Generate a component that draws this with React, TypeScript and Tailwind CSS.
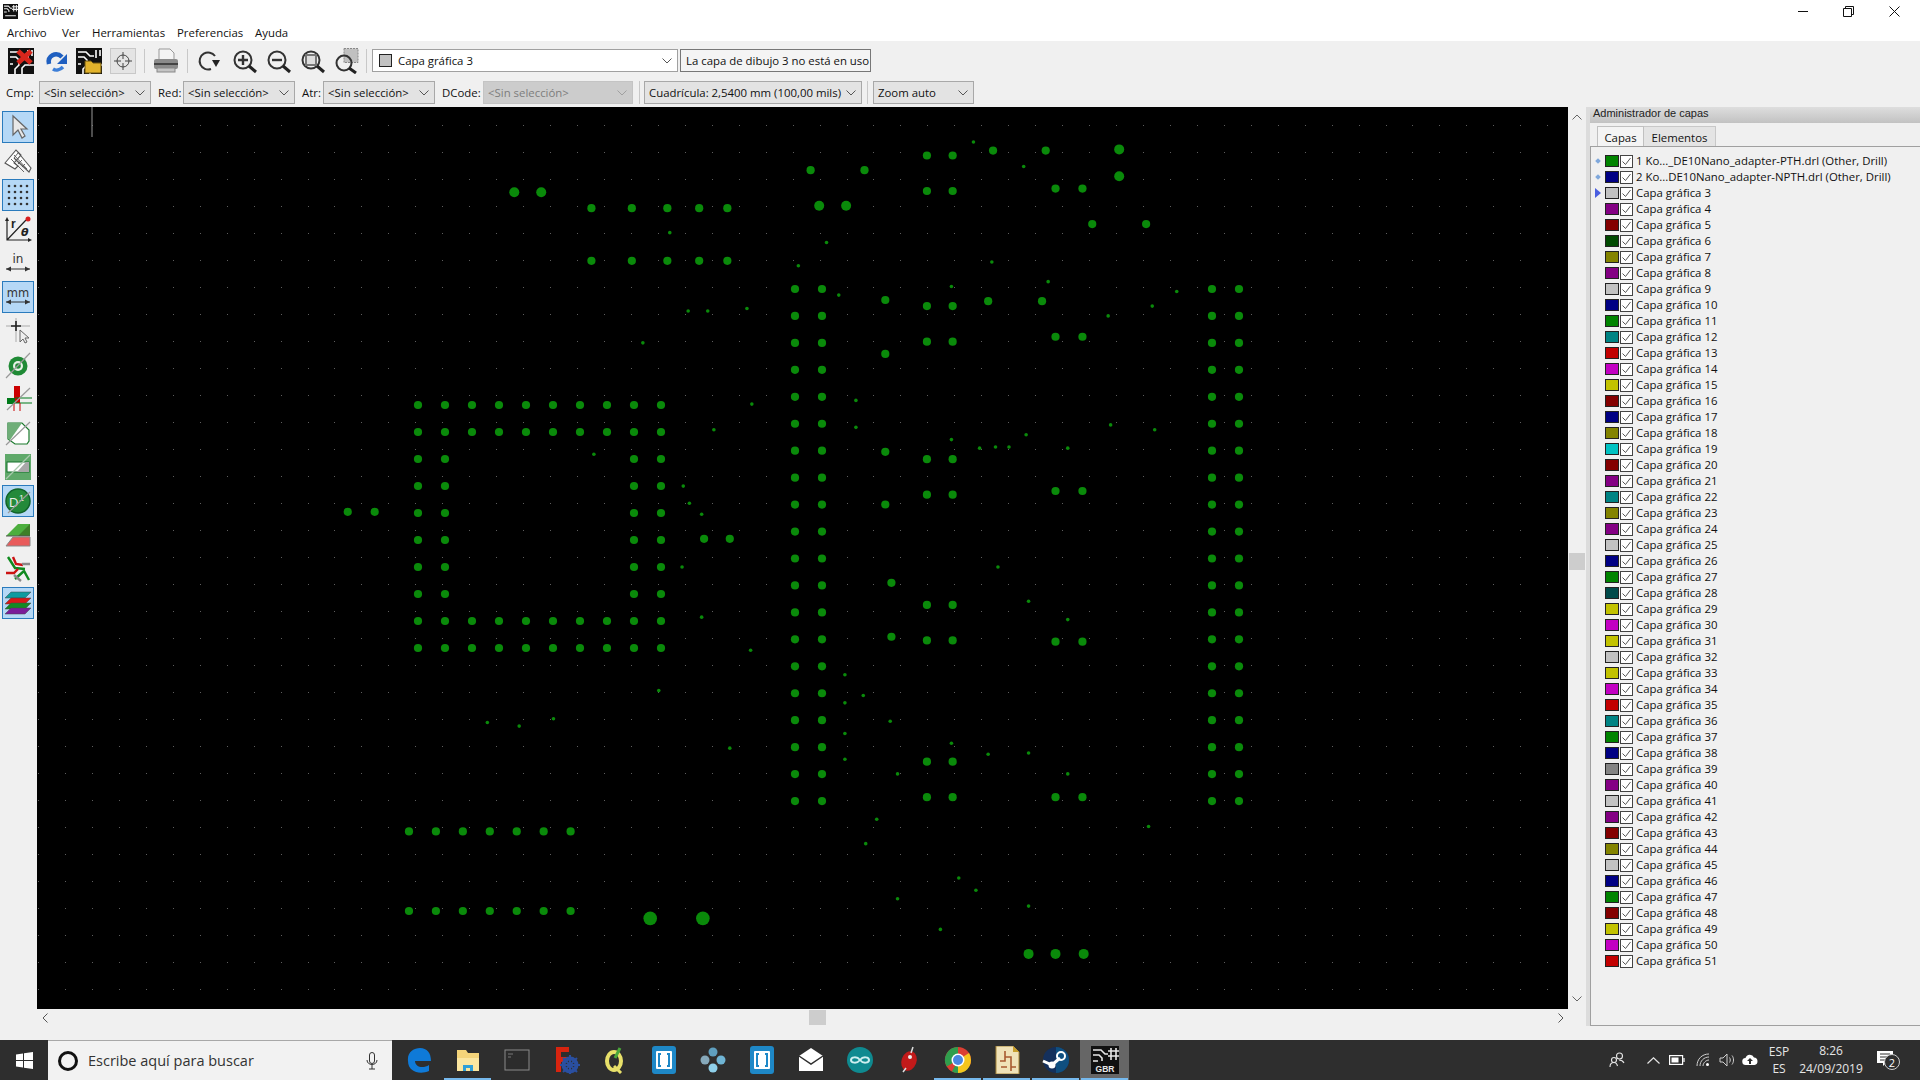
import React from 'react';

const k = 1920 / 1568;

const range = (from: number, count: number, step: number) => Array.from({ length: count }, (_, i) => from + i * step);

// drill hits, in full-size page coordinates
const pinHoles: [number, number][] = [];
range(418, 10, 27).forEach((x, i) => {
  range(405, 10, 27).forEach((y, j) => {
    if (j < 2 || j > 7 || i < 2 || i > 7) pinHoles.push([x, y]);
  });
});
[795, 822, 1212, 1239].forEach((x) => range(289, 20, 26.95).forEach((y) => pinHoles.push([x, y])));

// the rest was read off the shrunk picture
const mediumHoles: [number, number][] = ([
  [483, 170], [516, 170], [545, 170], [571, 170], [594, 170], [483, 213], [516, 213], [545, 213], [571, 213], [594, 213],
  [662, 139], [706, 139], [757, 127], [778, 127], [811, 123], [854, 123], [757, 156], [778, 156], [862, 154], [884, 154],
  [892, 183], [936, 183], [723, 245], [757, 250], [778, 250], [807, 246], [851, 246], [757, 279], [778, 279], [862, 275],
  [884, 275], [723, 289], [723, 369], [757, 375], [778, 375], [757, 404], [778, 404], [862, 401], [884, 401], [723, 412],
  [728, 476], [757, 494], [778, 494], [728, 520], [757, 523], [778, 523], [862, 524], [884, 524], [757, 622], [778, 622],
  [757, 651], [778, 651], [862, 651], [884, 651], [284, 418], [306, 418], [575, 440], [596, 440],
  [334, 679], [356, 679], [378, 679], [400, 679], [422, 679], [444, 679], [466, 679],
  [334, 744], [356, 744], [378, 744], [400, 744], [422, 744], [444, 744], [466, 744],
] as [number, number][]).map(([x, y]) => [x * k, y * k]);

const largeHoles: [number, number][] = ([
  [420, 157], [442, 157], [669, 168], [691, 168], [914, 122], [914, 144], [840, 779], [862, 779], [885, 779],
] as [number, number][]).map(([x, y]) => [x * k, y * k]);

const mountHoles: [number, number][] = ([[531, 750], [574, 750]] as [number, number][]).map(([x, y]) => [x * k, y * k]);

const vias: [number, number][] = ([
  [795, 116], [836, 136], [547, 190], [675, 198], [652, 217], [810, 214], [856, 230], [777, 234], [685, 241], [961, 238],
  [941, 250], [905, 258], [562, 254], [578, 254], [610, 252], [525, 280], [614, 330], [583, 351], [699, 327], [699, 349],
  [907, 347], [943, 351], [838, 355], [777, 359], [800, 366], [813, 365], [824, 365], [872, 366], [485, 371], [558, 397],
  [563, 411], [573, 420], [557, 463], [815, 463], [840, 491], [573, 504], [872, 506], [690, 551], [613, 531], [538, 564],
  [705, 568], [690, 574], [727, 589], [690, 599], [398, 590], [424, 593], [452, 587], [596, 611], [777, 607], [807, 616],
  [840, 615], [733, 632], [690, 620], [872, 632], [716, 669], [938, 675], [707, 689], [783, 717], [797, 727], [733, 734],
  [840, 740], [768, 759],
] as [number, number][]).map(([x, y]) => [x * k, y * k]);

let gridPath = '';
range(38, 57, 26.95).forEach((x) => {
  range(125, 33, 27).forEach((y) => {
    gridPath += `M${Math.round(x)} ${y}h1v1h-1z`;
  });
});

const G = '#008400', N = '#000084', S = '#c2c2c2', P = '#840084', R = '#840000', DG = '#004a00', O = '#848400';
const T = '#008484', B = '#c20000', M = '#c200c2', Y = '#c2c200', C = '#00c2c2', DT = '#004a4a', D = '#848484';

const layerColors = [
  G, N, S, P, R, DG, O, P, S, N, G, T, B, M, Y, R, N, O, C, R, P, T, O, P, S, N, G, DT, Y, M, Y, S, Y, M, B, T, G, N, D, P, S,
  P, R, O, S, N, G, R, Y, M, B,
];

const layerName = (i: number) => {
  if (i === 0) return '1 Ko..._DE10Nano_adapter-PTH.drl (Other, Drill)';
  if (i === 1) return '2 Ko...DE10Nano_adapter-NPTH.drl (Other, Drill)';
  return `Capa gráfica ${i + 1}`;
};

const Chevron = ({ color = '#555' }: { color?: string }) => (
  <svg width="10" height="6" viewBox="0 0 10 6" fill="none" stroke={color}>
    <path d="M0.5 0.5 5 5 9.5 0.5" />
  </svg>
);

const Separator = ({ className }: { className: string }) => <div className={`w-px h-[24px] bg-[#c8c8c8] ${className}`} />;

const Select = ({ text, className, disabled }: { text: string; className: string; disabled?: boolean }) => (
  <div
    className={`h-[23px] flex items-center justify-between pl-[4px] pr-[5px] border whitespace-nowrap ${
      disabled ? 'border-[#c4c4c4] bg-[#cccccc] text-[#7d7d7d]' : 'border-[#a8a8a8] bg-[#e3e3e3] text-[#111]'
    } ${className}`}
  >
    <span>{text}</span>
    <Chevron color={disabled ? '#a0a0a0' : '#555'} />
  </div>
);

const BoardTraces = () => (
  <>
    <rect x="0" y="0" width="26" height="26" fill="#111" />
    <path d="M2 4h8l4 4h4M2 9h6l3 3v5l-4 4v5M14 26v-6l3-3h9M2 16h3M20 2v8M24 2v6" stroke="#fff" strokeWidth="1.6" fill="none" />
  </>
);

const Magnifier = ({ children }: { children?: React.ReactNode }) => (
  <svg width="26" height="26" viewBox="0 0 26 26" fill="none">
    <circle cx="11" cy="12" r="8.5" stroke="#333" strokeWidth="2" />
    <path d="M17 18l7 6" stroke="#222" strokeWidth="3" />
    {children}
  </svg>
);

const Toolbar1 = () => (
  <div className="h-[39px] bg-[#f0f0f0] flex items-center pl-[8px]">
    <svg width="26" height="26" viewBox="0 0 26 26">
      <BoardTraces />
      <path d="M10 3l13 12M23 3 10 15" stroke="#d8261c" strokeWidth="5" />
    </svg>
    <svg className="ml-[10px]" width="26" height="26" viewBox="0 0 26 26" fill="none">
      <path d="M5 16C3 8 12 3 18 9" stroke="#1f5fc0" strokeWidth="4.5" />
      <path d="M23 6v10H13z" fill="#1f5fc0" />
      <path d="M9 21c3 2 7 1 10-2" stroke="#3d7fd8" strokeWidth="3.5" />
    </svg>
    <svg className="ml-[6px]" width="26" height="26" viewBox="0 0 26 26">
      <BoardTraces />
      <path d="M9 13h6l2 2h8v10H9z" fill="#e2b32c" stroke="#6b5412" />
    </svg>
    <div className="ml-[8px] w-[26px] h-[26px] bg-[#e4e4e4] border border-[#c8c8c8] flex items-center justify-center">
      <svg width="20" height="20" viewBox="0 0 20 20" fill="none" stroke="#444">
        <circle cx="10" cy="10" r="6" />
        <path d="M10 1v7M10 12v7M1 10h7M12 10h7" />
      </svg>
    </div>
    <Separator className="ml-[8px]" />
    <svg className="ml-[8px]" width="26" height="26" viewBox="0 0 26 26">
      <path d="M6 1h11l4 4v7H6z" fill="#f4f4f4" stroke="#999" />
      <rect x="1" y="11" width="24" height="10" rx="2" fill="#8b8b8b" />
      <rect x="1" y="15" width="24" height="2" fill="#444" />
      <rect x="4" y="20" width="18" height="4" fill="#c4c4c4" stroke="#888" />
    </svg>
    <Separator className="ml-[8px]" />
    <svg className="ml-[8px]" width="26" height="26" viewBox="0 0 26 26" fill="none">
      <path d="M19 8A8.5 8.5 0 1 0 15 21" stroke="#333" strokeWidth="2" />
      <path d="M16 12h8l-4 7z" fill="#222" />
    </svg>
    <div className="ml-[10px]">
      <Magnifier>
        <path d="M6 12h10M11 7v10" stroke="#333" strokeWidth="2.4" />
      </Magnifier>
    </div>
    <div className="ml-[8px]">
      <Magnifier>
        <path d="M6 12h10" stroke="#333" strokeWidth="2.4" />
      </Magnifier>
    </div>
    <div className="ml-[8px]">
      <Magnifier>
        <rect x="6" y="7" width="10" height="10" stroke="#777" strokeWidth="2" fill="#ddd" />
      </Magnifier>
    </div>
    <div className="ml-[8px]">
      <svg width="26" height="26" viewBox="0 0 26 26" fill="none">
        <rect x="10" y="0.5" width="14" height="14" fill="#c0c0c0" stroke="#888" strokeDasharray="2 1" />
        <circle cx="10" cy="15" r="7.5" stroke="#333" strokeWidth="2" />
        <path d="M15 20l7 5" stroke="#222" strokeWidth="3" />
      </svg>
    </div>
    <Separator className="ml-[6px]" />
    <div className="ml-[5px] w-[306px] h-[23px] bg-white border border-[#a0a0a0] flex items-center justify-between pl-[6px] pr-[5px]">
      <div className="flex items-center">
        <span className="w-[13px] h-[13px] bg-[#c2c2c2] border border-[#222]" />
        <span className="ml-[6px] text-[#111]">Capa gráfica 3</span>
      </div>
      <Chevron />
    </div>
    <div className="ml-[2px] w-[191px] h-[23px] border border-[#777] bg-[#f4f4f4] flex items-center pl-[5px] whitespace-nowrap text-[#111]">
      La capa de dibujo 3 no está en uso
    </div>
  </div>
);

const Toolbar2 = () => (
  <div className="h-[27px] bg-[#f0f0f0] flex items-start pt-[1px] pl-[6px] text-[#111]">
    <span className="w-[33px] h-[23px] flex items-center">Cmp:</span>
    <Select text="<Sin selección>" className="w-[112px]" />
    <span className="ml-[7px] w-[25px] h-[23px] flex items-center">Red:</span>
    <Select text="<Sin selección>" className="w-[112px]" />
    <span className="ml-[7px] w-[21px] h-[23px] flex items-center">Atr:</span>
    <Select text="<Sin selección>" className="w-[112px]" />
    <span className="ml-[7px] w-[41px] h-[23px] flex items-center">DCode:</span>
    <Select text="<Sin selección>" className="w-[150px]" disabled />
    <div className="ml-[6px] mr-[4px] w-px h-[23px] bg-[#c8c8c8]" />
    <Select text="Cuadrícula: 2,5400 mm (100,00 mils)" className="w-[218px]" />
    <div className="ml-[5px] mr-[5px] w-px h-[23px] bg-[#c8c8c8]" />
    <Select text="Zoom auto" className="w-[101px]" />
  </div>
);

const SideButton = ({ active, children }: { active?: boolean; children: React.ReactNode }) => (
  <div className={`w-[32px] h-[32px] flex items-center justify-center border ${active ? 'border-[#2a7bbd] bg-[#b5d8f6]' : 'border-transparent'}`}>
    <svg width="28" height="28" viewBox="0 0 28 28" fill="none">
      {children}
    </svg>
  </div>
);

const LeftToolbar = () => (
  <div className="w-[37px] shrink-0 bg-[#f0f0f0] flex flex-col gap-[2px] pl-[2px] pt-[4px]">
    <SideButton active>
      <path d="M9 3v19l5-5 4 8 3-2-4-7h6z" fill="#e8e8e8" stroke="#666" strokeWidth="1.2" />
    </SideButton>
    <SideButton>
      <path d="M1 16 12 3l5 5-7 8 4 3-3 3zM12 3l15 18-2 4L10 11" fill="#fff" stroke="#555" strokeWidth="1.1" />
      <path d="M7 12l13 13M10 8l13 14M14 6l-4 5M18 13l-4 4M21 17l-3 3" stroke="#555" strokeWidth="0.9" />
    </SideButton>
    <SideButton active>
      {range(5, 4, 6).map((y) =>
        range(5, 4, 6).map((x) => <circle key={`${x}-${y}`} cx={x} cy={y} r="1.3" fill="#333" />),
      )}
    </SideButton>
    <SideButton>
      <path d="M3 4v21h23M3 25 22 5" stroke="#222" strokeWidth="1.2" />
      <path d="M1 6l2-4 2 4zM24 23l4 2-4 2z" fill="#222" />
      <circle cx="24" cy="4" r="2.5" fill="#d81e1e" />
      <text x="7" y="13" fontSize="12" fontWeight="700" fill="#222" fontFamily="'Liberation Sans', sans-serif">r</text>
      <text x="17" y="21" fontSize="11" fontWeight="700" fontStyle="italic" fill="#222" fontFamily="'DejaVu Sans', sans-serif">θ</text>
    </SideButton>
    <SideButton>
      <text x="14" y="14" textAnchor="middle" fontSize="12" fill="#333" fontFamily="'DejaVu Sans', sans-serif">in</text>
      <path d="M2 20h24" stroke="#333" />
      <path d="M2 20l5-2.500v5zM26 20l-5-2.500v5z" fill="#333" />
    </SideButton>
    <SideButton active>
      <text x="14" y="14" textAnchor="middle" fontSize="11.5" fill="#333" fontFamily="'DejaVu Sans', sans-serif">mm</text>
      <path d="M2 19h24" stroke="#333" />
      <path d="M2 19l5-2.500v5zM26 19l-5-2.500v5z" fill="#333" />
    </SideButton>
    <SideButton>
      <path d="M12 1v24M2 9h24" stroke="#aaa" />
      <path d="M12 4v10M7 9h10" stroke="#222" strokeWidth="1.6" />
      <path d="M16 13v12l3-3 2 4 2-1-2-4h4z" fill="#eee" stroke="#666" />
    </SideButton>
    <SideButton>
      <circle cx="14" cy="15" r="9.500" fill="#1f8a35" />
      <circle cx="14" cy="15" r="5" fill="#e6f2e6" />
      <circle cx="14" cy="15" r="2.800" fill="#1f8a35" />
      <path d="M2 27 26 2" stroke="#999" strokeWidth="1.2" />
    </SideButton>
    <SideButton>
      <rect x="10" y="1" width="6" height="17" fill="#cc0000" />
      <rect x="3" y="13" width="8" height="6" fill="#007a1a" />
      <path d="M11 13h17M11 18h17" stroke="#007a1a" />
      <path d="M10 18v8M16 18v8" stroke="#cc0000" />
      <path d="M3 25 26 3" stroke="#999" strokeWidth="1.2" />
    </SideButton>
    <SideButton>
      <path d="M4 4h14l7 7v11l-2 3H11l-7-5z" fill="#fff" stroke="#1a7a2c" strokeWidth="1.2" />
      <path d="M4 4h14L6 21l-2-1z" fill="#6fae78" />
      <path d="M2 26 26 3" stroke="#999" strokeWidth="1.2" />
    </SideButton>
    <SideButton>
      <rect x="1" y="1" width="26" height="26" fill="#5fa96a" />
      <rect x="3" y="9" width="22" height="10" fill="#fff" stroke="#15702a" />
      <path d="M13 19l9-10h3v10z" fill="#a8a8a8" />
      <path d="M2 26 26 2" stroke="#a9c9ad" strokeWidth="1.2" />
    </SideButton>
    <SideButton active>
      <circle cx="14" cy="14" r="12" fill="#248a3a" stroke="#11632a" strokeWidth="1.5" />
      <text x="5" y="20" fontSize="13" fill="#e8f0e8" fontFamily="'Liberation Sans', sans-serif">D</text>
      <text x="15" y="14" fontSize="9" fill="#e8f0e8" fontFamily="'Liberation Sans', sans-serif">1</text>
      <path d="M4 26 26 5" stroke="#9a9a9a" strokeWidth="1.2" />
    </SideButton>
    <SideButton>
      <path d="M2 15 14 3h12v12z" fill="#4cae3e" />
      <path d="M14 15 26 3v12z" fill="#3d7f28" />
      <path d="M2 15h24" stroke="#555" />
      <path d="M2 25l7-9h17v9z" fill="#e85b5b" stroke="#888" />
    </SideButton>
    <SideButton>
      <path d="M4 2l7 11 10 1M11 24l9-8 5 9" stroke="#0f8a1e" strokeWidth="2.400" />
      <path d="M9 2l3 7 7 1M2 18h8l4-4" stroke="#cc1212" strokeWidth="2.400" />
      <path d="M18 9h8M10 20l7 6" stroke="#8a8a8a" strokeWidth="2.400" />
    </SideButton>
    <SideButton active>
      <path d="M7 3h20l-6 6H1z" fill="#0f9ba0" stroke="#444" strokeWidth="0.5" />
      <path d="M7 9h20l-6 6H1z" fill="#d81818" stroke="#444" strokeWidth="0.5" />
      <path d="M7 14h20l-6 6H1z" fill="#138a24" stroke="#444" strokeWidth="0.5" />
      <path d="M7 19h20l-6 6H1z" fill="#7a1c9a" stroke="#444" strokeWidth="0.5" />
    </SideButton>
  </div>
);

const GerberCanvas = () => (
  <div className="h-[902px] bg-black">
    <svg className="block" width="1531" height="902" viewBox="37 107 1531 902">
      <path d={gridPath} fill="#5e5e5e" />
      <path d="M92 107v30" stroke="#9a9a9a" />
      <g fill="#0a8a0a">
        {pinHoles.map(([x, y], i) => <circle key={`p${i}`} cx={x} cy={y} r="4.1" />)}
        {mediumHoles.map(([x, y], i) => <circle key={`m${i}`} cx={x} cy={y} r="4.1" />)}
        {largeHoles.map(([x, y], i) => <circle key={`l${i}`} cx={x} cy={y} r="5" />)}
        {mountHoles.map(([x, y], i) => <circle key={`b${i}`} cx={x} cy={y} r="6.8" />)}
        {vias.map(([x, y], i) => <circle key={`v${i}`} cx={x} cy={y} r="1.8" />)}
      </g>
    </svg>
  </div>
);

const CenterArea = () => (
  <div className="w-[1549px] shrink-0 flex flex-col">
    <div className="flex">
      <GerberCanvas />
      <div className="w-[18px] bg-[#f0f0f0] h-[902px] flex flex-col items-center py-[7px]">
        <div className="rotate-180">
          <Chevron color="#666" />
        </div>
        <div className="mt-[433px] w-[16px] h-[17px] bg-[#cdcdcd]" />
        <div className="mt-auto">
          <Chevron color="#666" />
        </div>
      </div>
    </div>
    <div className="h-[17px] bg-[#f0f0f0] flex items-center pl-[3px] pr-[20px]">
      <div className="rotate-90">
        <Chevron color="#555" />
      </div>
      <div className="ml-[759px] w-[17px] h-[15px] bg-[#cdcdcd]" />
      <div className="ml-auto -rotate-90">
        <Chevron color="#555" />
      </div>
    </div>
  </div>
);

const LayerRow = ({ index, color }: { index: number; color: string }) => (
  <div className="h-[16px] flex items-center">
    <span className="w-[14px] flex justify-center">
      {index < 2 && <span className="w-[4px] h-[4px] rotate-45 bg-[#7fa8dc]" />}
      {index === 2 && (
        <svg width="6" height="10" viewBox="0 0 6 10">
          <path d="M0 0l6 5-6 5z" fill="#4a5fe0" />
        </svg>
      )}
    </span>
    <span className="w-[14px] h-[12px] border border-[#222]" style={{ backgroundColor: color }} />
    <span className="ml-px w-[13px] h-[13px] bg-white border border-[#444] flex items-center justify-center">
      <svg width="11" height="11" viewBox="0 0 11 11" fill="none" stroke="#555">
        <path d="M1.5 5.5 4.5 8.5 9.5 2" />
      </svg>
    </span>
    <span className="ml-[3px] whitespace-nowrap text-[#111]">{layerName(index)}</span>
  </div>
);

const LayerPanel = () => (
  <div className="w-[334px] shrink-0 flex bg-[#f0f0f0]">
    <div className="w-[4px] bg-[#dcdcdc]" />
    <div className="flex-1 flex flex-col">
      <div className="h-[16px] bg-gradient-to-b from-[#dedede] to-[#c2c2c2] pl-[3px] pb-[3px] flex items-center text-[11px] text-[#222] font-['Liberation_Sans',sans-serif]">
        Administrador de capas
      </div>
      <div className="h-[24px] flex items-end pl-[7px] border-b border-[#a0a0a0]">
        <div className="w-[47px] h-[20px] pt-[2px] bg-[#f4f4f4] border border-b-0 border-[#c0c0c0] flex items-center justify-center text-[#111]">Capas</div>
        <div className="w-[72px] h-[20px] pt-[2px] bg-[#e4e4e4] border border-l-0 border-b-0 border-[#c8c8c8] flex items-center justify-center text-[#111]">Elementos</div>
      </div>
      <div className="h-[879px] border-l border-b border-[#a0a0a0] pt-[6px]">
        {layerColors.map((color, i) => (
          <LayerRow key={i} index={i} color={color} />
        ))}
      </div>
    </div>
  </div>
);

const TaskButton = ({ active, current, children }: { active?: boolean; current?: boolean; children: React.ReactNode }) => (
  <div className={`relative w-[49px] h-[40px] flex items-center justify-center ${current ? 'bg-[#666666]' : ''}`}>
    <svg width="28" height="28" viewBox="0 0 28 28" fill="none">
      {children}
    </svg>
    {active && <div className="absolute left-[1px] right-[1px] bottom-0 h-[2px] bg-[#76b9ed]" />}
  </div>
);

const BracketsIcon = () => (
  <>
    <rect x="2" y="0" width="24" height="28" rx="3" fill="#1e88c7" />
    <rect x="6" y="5" width="16" height="18" rx="1" fill="#fff" />
    <path d="M11 8H9v12h2M17 8h2v12h-2" stroke="#1e88c7" strokeWidth="2" />
  </>
);

const Taskbar = () => (
  <div className="h-[40px] bg-[#2e2e2e] flex items-center">
    <div className="w-[48px] h-[40px] flex items-center justify-center">
      <svg width="17" height="17" viewBox="0 0 17 17" fill="#fff">
        <path d="M0 2.4 7 1.4v6.6H0zM8 1.3 17 0v8H8zM0 9h7v6.6l-7-1zM8 9h9v8l-9-1.3z" />
      </svg>
    </div>
    <div className="w-[344px] h-[40px] bg-[#f2f2f2] border-t border-[#a8a8a8] flex items-center pl-[10px] text-[14.5px] text-[#333]">
      <span className="w-[20px] h-[20px] rounded-full border-[3px] border-[#111]" />
      <span className="ml-[10px] flex-1">Escribe aquí para buscar</span>
      <svg className="mr-[14px]" width="12" height="18" viewBox="0 0 12 18" fill="none" stroke="#333">
        <rect x="3.5" y="0.5" width="5" height="11" rx="2.5" />
        <path d="M1 8c0 6 10 6 10 0M6 13v4M3 17h6" />
      </svg>
    </div>
    <div className="pl-[2px] flex">
      <TaskButton>
        <path d="M3 15C2 6 9 2 15 2c7 0 11 5 11 13H10c0 6 8 8 14 4v6c-9 4-21 1-21-10z" fill="#0f7ad8" />
      </TaskButton>
      <TaskButton active>
        <path d="M3 4h9l2 3h11v18H3z" fill="#f4d47a" />
        <rect x="3" y="12" width="22" height="13" fill="#fbe6a0" />
        <path d="M9 25v-6h10v6h-3v-3h-4v3z" fill="#2f9fd8" />
      </TaskButton>
      <TaskButton>
        <rect x="2" y="4" width="24" height="20" fill="#2c2c2c" stroke="#8a8a8a" />
        <path d="M5 8h5M5 11h3" stroke="#777" />
      </TaskButton>
      <TaskButton>
        <path d="M4 1h13v5h-8v5h6v5H9v10H4z" fill="#d8240f" />
        <circle cx="18" cy="19" r="6.5" fill="none" stroke="#2a4fa0" strokeWidth="4" />
        <path d="M18 9v20M8 19h20M11 12l14 14M25 12 11 26" stroke="#2a4fa0" strokeWidth="2" />
      </TaskButton>
      <TaskButton>
        <ellipse cx="13" cy="15" rx="7" ry="9" stroke="#e8e06a" strokeWidth="4" />
        <path d="M13 20l7 7" stroke="#e8e06a" strokeWidth="3" />
        <path d="M19 2l-5 10" stroke="#4aa83a" strokeWidth="3" />
      </TaskButton>
      <TaskButton>
        <BracketsIcon />
      </TaskButton>
      <TaskButton>
        <circle cx="14" cy="6" r="4.5" fill="#5f9fbf" />
        <circle cx="14" cy="22" r="4.5" fill="#8fd0ea" />
        <circle cx="6" cy="14" r="4.5" fill="#86a9bb" />
        <circle cx="22" cy="14" r="4.5" fill="#6fb4d4" />
      </TaskButton>
      <TaskButton>
        <BracketsIcon />
      </TaskButton>
      <TaskButton>
        <path d="M2 10 14 2l12 8v15H2z" fill="#fff" />
        <path d="M2 10l12 8 12-8" stroke="#2e2e2e" strokeWidth="1.5" />
      </TaskButton>
      <TaskButton>
        <circle cx="14" cy="14" r="13" fill="#0f8a90" />
        <path d="M14 14c-3-4-9-3-9 0s6 4 9 0 9-3 9 0-6 4-9 0z" stroke="#cfeff0" strokeWidth="2" />
      </TaskButton>
      <TaskButton>
        <ellipse cx="14" cy="15" rx="7.500" ry="10" fill="#c21a1a" transform="rotate(20 14 15)" />
        <circle cx="15" cy="11" r="2" fill="#eee" />
        <path d="M18 1l-2 6M8 26l3-4" stroke="#ddd" strokeWidth="1.5" />
      </TaskButton>
      <TaskButton active>
        <circle cx="14" cy="14" r="13" fill="#db3f33" />
        <path d="M14 14 25.3 20.5A13 13 0 0 1 8 25.6z" fill="#2f9e4d" />
        <path d="M14 14 2.700 20.500A13 13 0 0 1 14 1h0z" fill="#2f9e4d" />
        <path d="M14 14 14 27A13 13 0 0 0 27 14 13 13 0 0 0 25 7z" fill="#f5c51d" />
        <circle cx="14" cy="14" r="6.5" fill="#fff" />
        <circle cx="14" cy="14" r="5" fill="#4a87e0" />
      </TaskButton>
      <TaskButton active>
        <path d="M3 0h17l6 6v22H3z" fill="#f0e2b8" stroke="#a8873a" />
        <path d="M20 0l6 6h-6z" fill="#c79f2e" />
        <path d="M12 5v10h-5M12 11h6v6M8 21h6M18 21h5M18 17v8" stroke="#a85a30" strokeWidth="1.6" />
      </TaskButton>
      <TaskButton active>
        <circle cx="14" cy="14" r="13" fill="#14305c" />
        <path d="M14 1a13 13 0 0 1 0 26z" fill="#0f4f80" />
        <path d="M1 15l9 4 8-7" stroke="#fff" strokeWidth="3" />
        <circle cx="19" cy="10" r="4" stroke="#fff" strokeWidth="2" />
        <circle cx="10" cy="19" r="3.5" fill="#fff" />
      </TaskButton>
      <TaskButton active current>
        <rect x="0" y="0" width="28" height="28" fill="#111" />
        <path d="M2 4h8l4 4h3M2 9h6l3 3v3M2 15h5M20 2v12M25 2v12M17 5h11M17 10h11" stroke="#e8e8e8" strokeWidth="1.6" />
        <text x="14" y="26" textAnchor="middle" fontSize="8.5" fontWeight="700" fill="#e8e8e8" fontFamily="'Liberation Sans', sans-serif">GBR</text>
      </TaskButton>
    </div>
    <div className="ml-auto h-[40px] flex items-center text-[12px] text-[#e6e6e6]">
      <svg width="16" height="16" viewBox="0 0 16 16" fill="none" stroke="#e6e6e6" strokeWidth="1.1">
        <circle cx="10.5" cy="4" r="3" />
        <circle cx="5" cy="8" r="2.5" />
        <path d="M1 15c0-3 2-4.500 4-4.500S8 12 8.500 14M10 8c2 0 4 1 5 3" />
      </svg>
      <svg className="ml-[22px]" width="13" height="7" viewBox="0 0 13 7" fill="none" stroke="#e6e6e6" strokeWidth="1.2">
        <path d="M0.500 6.500 6.500 0.800l6 5.700" />
      </svg>
      <svg className="ml-[9px]" width="16" height="10" viewBox="0 0 16 10" fill="none" stroke="#fff" strokeWidth="1.2">
        <rect x="0.600" y="0.600" width="13" height="8.800" />
        <rect x="2.500" y="2.500" width="7" height="5" fill="#fff" stroke="none" />
        <path d="M15 3v4" />
      </svg>
      <svg className="ml-[11px]" width="14" height="14" viewBox="0 0 14 14" fill="none" stroke="#cfcfcf" strokeWidth="1">
        <path d="M1 13C1 6 6 1 13 1M4 13c0-5 4-9 9-9M7 13c0-3 3-6 6-6" />
        <circle cx="11.500" cy="11.500" r="1.500" fill="#fff" stroke="none" />
      </svg>
      <svg className="ml-[9px]" width="16" height="14" viewBox="0 0 16 14" fill="none" stroke="#cfcfcf" strokeWidth="1">
        <path d="M1 5h3l4-4v12L4 9H1zM10.500 4.500c1 1.500 1 3.500 0 5M13 2.500c2 2.500 2 6.500 0 9" />
      </svg>
      <svg className="ml-[7px]" width="16" height="12" viewBox="0 0 16 12">
        <path d="M4 11a3.500 3.500 0 0 1-.5-7A4.500 4.500 0 0 1 12 3.500 3.800 3.800 0 0 1 12.500 11z" fill="#fff" />
        <path d="M8 4l3 3H9v3H7V7H5z" fill="#2e2e2e" />
      </svg>
      <div className="ml-[8px] w-[26px] text-center leading-[17px]">
        <div>ESP</div>
        <div>ES</div>
      </div>
      <div className="ml-[7px] w-[64px] text-center leading-[18px]">
        <div>8:26</div>
        <div>24/09/2019</div>
      </div>
      <div className="relative ml-[14px] w-[18px] h-[18px] mr-[25px]">
        <svg width="17" height="15" viewBox="0 0 17 15" fill="#fff">
          <path d="M0 0h16v12H9l-3 3v-3H0z" />
          <path d="M3 3h10M3 6h10M3 9h7" stroke="#2e2e2e" />
        </svg>
        <span className="absolute left-[7px] top-[3px] w-[16px] h-[16px] rounded-full border border-[#ccc] bg-[#2e2e2e] flex items-center justify-center text-[11px] leading-none text-white">2</span>
      </div>
    </div>
  </div>
);

export default function App() {
  return (
    <div className="w-[1920px] h-[1080px] flex flex-col overflow-hidden bg-white text-[11.4px] font-['Open_Sans','Liberation_Sans',sans-serif]">
      <div className="h-[21px] flex items-center pl-[3px] pt-[1px] relative">
        <svg width="15" height="15" viewBox="0 0 28 28">
          <rect width="28" height="28" fill="#111" />
          <path d="M2 4h8l4 4h3M2 9h6l3 3v3M2 15h5M20 2v12M25 2v12M17 5h11M17 10h11M4 22h20" stroke="#eee" strokeWidth="2" />
        </svg>
        <span className="ml-[5px] text-[#222]">GerbView</span>
        <div className="ml-auto flex items-center">
          <svg width="11" height="11" viewBox="0 0 11 11" stroke="#111" fill="none" className="mr-[34px]">
            <path d="M0 5.500h10" />
          </svg>
          <svg width="11" height="11" viewBox="0 0 11 11" stroke="#111" fill="none" className="mr-[35px]">
            <path d="M0.500 2.500h8v8h-8zM2.500 2.500v-2h8v8h-2" />
          </svg>
          <svg width="11" height="11" viewBox="0 0 11 11" stroke="#111" fill="none" className="mr-[20px]">
            <path d="M0.500 0.500l10 10M10.500 0.500l-10 10" />
          </svg>
        </div>
      </div>
      <div className="h-[20px] flex items-center pl-[7px] pt-[3px] text-[#111]">
        <span className="w-[55px]">Archivo</span>
        <span className="w-[30px]">Ver</span>
        <span className="w-[85px]">Herramientas</span>
        <span className="w-[78px]">Preferencias</span>
        <span>Ayuda</span>
      </div>
      <Toolbar1 />
      <Toolbar2 />
      <div className="h-[919px] flex bg-[#f0f0f0]">
        <LeftToolbar />
        <CenterArea />
        <LayerPanel />
      </div>
      <div className="h-[14px] bg-[#f0f0f0]" />
      <Taskbar />
    </div>
  );
}
